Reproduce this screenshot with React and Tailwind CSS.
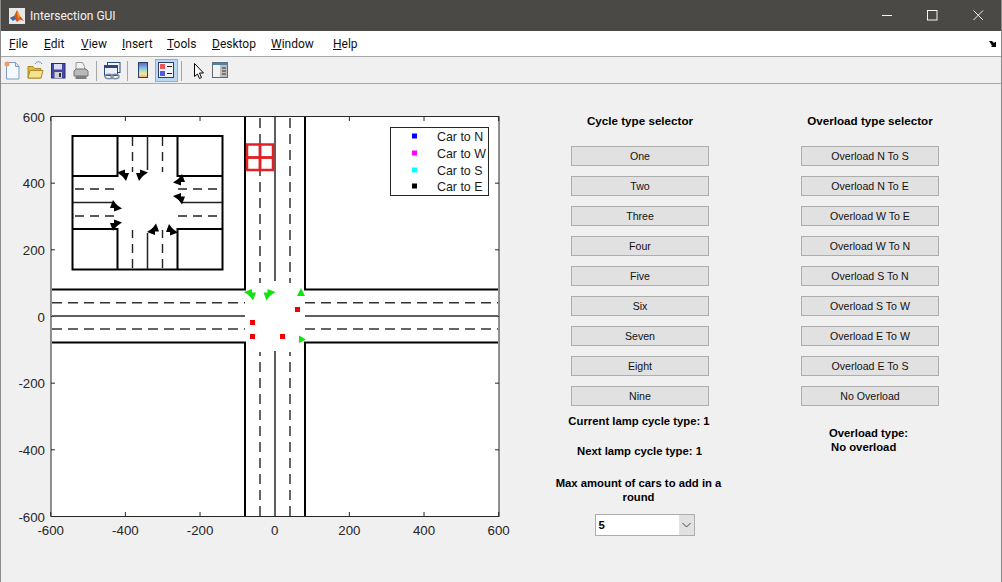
const menus = [["F","ile","w-[35px]"],["E","dit","w-[37px]"],["V","iew","w-[41px]"],["I","nsert","w-[45px]"],["T","ools","w-[45px]"],["D","esktop","w-[59px]"],["W","indow","w-[62px]"],["H","elp","w-[30px]"]];
const cycle = ["One","Two","Three","Four","Five","Six","Seven","Eight","Nine"];
const over = ["Overload N To S","Overload N To E","Overload W To E","Overload W To N","Overload S To N","Overload S To W","Overload E To W","Overload E To S","No Overload"];

function Btn({ children }) {
  return <button className="w-[138px] h-[20px] shrink-0 bg-[#e1e1e1] border border-[#adadad] text-[10.600px] font-normal leading-[18px] text-[#111] text-center">{children}</button>;
}

function Arrow({ x, y, sx = 1, sy = 1, color }) {
  return (
    <g transform={`translate(${x} ${y}) scale(${sx} ${sy})`} fill={color}>
      <polygon points="-6,-1.500 2,-4.500 2,4" />
      <polygon points="3,7 -3,-1 6,-1" />
    </g>
  );
}

function Plot() {
  const xt = [-600,-400,-200,0,200,400,600];
  const yt = [600,400,200,0,-200,-400,-600];
  const X = v => 274.7 + v * 0.3733;
  const Y = v => 316 - v / 3;
  return (
    <svg width="540" height="498" viewBox="1 84 540 498" className="shrink-0 block" style={{fontFamily:'"Liberation Sans",Arial,sans-serif'}}>
      <rect x="51" y="116.500" width="448" height="400" fill="#fff" stroke="#262626" strokeWidth="1" />
      {xt.map(v => <g key={v}>
        <line x1={X(v)} x2={X(v)} y1="516" y2="512" stroke="#262626" />
        <line x1={X(v)} x2={X(v)} y1="117" y2="121" stroke="#262626" />
        <text x={X(v)} y="535" textAnchor="middle" fontSize="13.3" fill="#262626">{v}</text>
      </g>)}
      {yt.map(v => <g key={v}>
        <line x1="51" x2="55" y1={Y(v)+.5} y2={Y(v)+.5} stroke="#262626" />
        <line x1="499" x2="495" y1={Y(v)+.5} y2={Y(v)+.5} stroke="#262626" />
        <text x="45" y={Y(v)+5.500} textAnchor="end" fontSize="13.3" fill="#262626">{v}</text>
      </g>)}

      {/* main roads */}
      <g fill="none">
        <path d="M245 117V289.500H52M305 117V289.500H498M245 516V342.500H52M305 516V342.500H498" stroke="#000" strokeWidth="2" />
        <path d="M275 117V281M275 516V351M52 316H245M305 316H498" stroke="#5e5e5e" strokeWidth="2" />
        <path d="M260 118V283M290 118V283M260 516V352M290 516V352" stroke="#555" strokeWidth="1.800" strokeDasharray="10 6" />
        <path d="M52 302.700H245M305 302.700H498M52 329H245M305 329H498" stroke="#333" strokeWidth="1.600" strokeDasharray="10 6" />
      </g>
      <rect x="247" y="144.500" width="13" height="13" fill="none" stroke="#e02226" strokeWidth="2.500" />
      <rect x="260" y="144.500" width="13" height="13" fill="none" stroke="#e02226" strokeWidth="2.500" />
      <rect x="247" y="157.500" width="13" height="12.500" fill="none" stroke="#e02226" strokeWidth="2.500" />
      <rect x="260" y="157.500" width="13" height="12.500" fill="none" stroke="#e02226" strokeWidth="2.500" />

      {/* lamps */}
      <Arrow x="250" y="293.500" color="#12e212" />
      <Arrow x="269.500" y="293.500" sx="-1" color="#12e212" />
      <polygon points="301,288 305,296 297,296" fill="#12e212" />
      <polygon points="299,335.500 306,339.500 299,343" fill="#12e212" />
      <rect x="295" y="307" width="5" height="5" fill="#f00000" />
      <rect x="250" y="320" width="5" height="5" fill="#f00000" />
      <rect x="250" y="334" width="5" height="5" fill="#f00000" />
      <rect x="280" y="334" width="5" height="5" fill="#f00000" />

      {/* inset */}
      <g fill="none">
        <rect x="72.500" y="136" width="150" height="133.500" stroke="#000" strokeWidth="2" />
        <path d="M117.500 136V176H72.500M177.500 136V176H222.500M117.500 269V229H72.500M177.500 269V229H222.500" stroke="#000" strokeWidth="2" />
        <path d="M147.500 136V170M147.500 269V233M73 202.500H113M182 202.500H222" stroke="#222" strokeWidth="1.500" />
        <path d="M132.500 137V172M162.500 137V172M132.500 268V230M162.500 268V230M75 189H117M178 189H220M75 216H117M178 216H220" stroke="#222" strokeWidth="1.400" strokeDasharray="9 6" />
      </g>
      <Arrow x="123" y="174" color="#000" />
      <Arrow x="142" y="174" sx="-1" color="#000" />
      <Arrow x="179" y="181" sy="-1" color="#000" />
      <Arrow x="179" y="197.500" color="#000" />
      <Arrow x="116" y="207" sx="-1" sy="-1" color="#000" />
      <Arrow x="116" y="224" sx="-1" color="#000" />
      <Arrow x="153" y="230.500" sy="-1" color="#000" />
      <Arrow x="172" y="231" sx="-1" sy="-1" color="#000" />

      {/* legend */}
      <rect x="390.500" y="127.500" width="98" height="68" fill="#fff" stroke="#262626" />
      {[["Car to N","#0000ff",136],["Car to W","#ff00ff",153],["Car to S","#00ffff",170],["Car to E","#000",186]].map(([t,c,y]) => <g key={t}>
        <rect x="412" y={y-2.500} width="5" height="5" fill={c} />
        <text x="437" y={y+5} fontSize="12.400" fill="#1a1a1a">{t}</text>
      </g>)}
    </svg>
  );
}

function Toolbar() {
  return (
    <svg width="240" height="26" viewBox="1 56 240 26" className="block shrink-0">
      {/* new */}
      <path d="M6.500 61.500h9l3.500 3.500v13h-12.500z" fill="#f4f9ff" stroke="#7d9dc4" />
      <circle cx="7" cy="63" r="2.500" fill="#f29a5c" />
      <path d="M15.500 61.500v4h3.500" fill="#dbe7f5" stroke="#7d9dc4" />
      {/* open */}
      <path d="M28 77v-11.500h5l1.500 2h6.500v9.500z" fill="#e2b93b" stroke="#a98a2b" />
      <path d="M28 77l2-7.500h13l-2 7.500z" fill="#f8e28e" stroke="#a98a2b" />
      <path d="M35 63c2-3 5-3 7 0" fill="none" stroke="#6f8db0" />
      {/* save */}
      <rect x="51.500" y="62.500" width="13.500" height="14.500" fill="#4648a8" stroke="#2b2d75" />
      <rect x="54" y="63" width="8" height="5.500" fill="#d9dcf5" />
      <rect x="54.500" y="71" width="7.500" height="6" fill="#cfcfcf" />
      <rect x="59" y="72" width="2" height="4" fill="#333" />
      {/* print */}
      <path d="M76 61.500h6.500l2 4v4h-8.500z" fill="#f2f2f2" stroke="#9a9a9a" />
      <path d="M74 70l2-2h10l2 2v5h-14z" fill="#b9b9b9" stroke="#757575" />
      <path d="M75.500 75h11v3h-11z" fill="#7d7d7d" />
      <line x1="96.500" x2="96.500" y1="60" y2="80" stroke="#a6a6a6" />
      {/* print preview / linked */}
      <rect x="107.500" y="61.500" width="12.500" height="10" fill="#f2f5fa" stroke="#2c4a79" />
      <rect x="104.500" y="64.500" width="13" height="10" fill="#eef2f8" stroke="#2c4a79" />
      <rect x="104.500" y="64.500" width="13" height="2.500" fill="#2c4a79" />
      <ellipse cx="109" cy="75.500" rx="4" ry="2.200" fill="none" stroke="#7e8ea4" strokeWidth="1.500" />
      <ellipse cx="115" cy="75.500" rx="4" ry="2.200" fill="none" stroke="#7e8ea4" strokeWidth="1.500" />
      <line x1="127.500" x2="127.500" y1="60" y2="80" stroke="#a6a6a6" />
      {/* colorbar */}
      <defs>
        <linearGradient id="cb" x1="0" y1="0" x2="0" y2="1">
          <stop offset="0" stopColor="#5b5fc7" />
          <stop offset=".45" stopColor="#8fd0e0" />
          <stop offset=".75" stopColor="#f5e98f" />
          <stop offset="1" stopColor="#f0a08a" />
        </linearGradient>
      </defs>
      <rect x="138.500" y="61.500" width="9" height="15" fill="url(#cb)" stroke="#2c3f6b" />
      {/* legend, active */}
      <rect x="155.500" y="58.500" width="22" height="22" fill="#b9d8f1" stroke="#7eb4e0" />
      <rect x="158.500" y="61.500" width="15" height="15" fill="#f3f3f3" stroke="#2c3f6b" />
      <rect x="160" y="63" width="5" height="5" fill="#e8585c" />
      <rect x="160" y="70" width="5" height="5" fill="#4c5be0" />
      <path d="M167 65.500h5M167 72.500h5" stroke="#222" />
      <line x1="181.500" x2="181.500" y1="60" y2="80" stroke="#a6a6a6" />
      {/* pointer */}
      <path d="M194.500 62.500v13l3-2.500 2 4.500 2-1-2-4.500h4z" fill="#fff" stroke="#000" />
      {/* property */}
      <rect x="212.500" y="61.500" width="15" height="15" fill="#f2f2f2" stroke="#666" />
      <rect x="212.500" y="61.500" width="15" height="2.500" fill="#4f81a8" />
      <rect x="220" y="64" width="7" height="12" fill="#bdbdbd" />
      <path d="M222 67h4M222 70h4M222 73h4" stroke="#333" />
    </svg>
  );
}

export default function App() {
  return (
    <div className="w-[1002px] h-[582px] flex flex-col overflow-hidden bg-[#f0f0f0] border-x border-[#8a8a8a]" style={{fontFamily:'"Liberation Sans",Arial,sans-serif'}}>
      <div className="h-[31px] shrink-0 bg-[#4b4946] flex items-center text-[#f2f2f2]">
        <svg width="16" height="16" viewBox="0 0 16 16" className="ml-[8px] mr-[5px]">
          <rect width="16" height="16" fill="#e8e8e8" />
          <path d="M1 10l4-2 3-6 3 6 4 5-4-1.500-3 2.500-2-3z" fill="#d9541e" />
          <path d="M1 10l4-2 2 3-3 2z" fill="#2a6fb8" />
          <path d="M8 2l3 6-2 3z" fill="#f0a020" />
        </svg>
        <span className="text-[12px]" style={{fontFamily:'Roboto,sans-serif'}}>Intersection GUI</span>
        <svg width="130" height="31" viewBox="0 0 130 31" className="ml-auto mr-[1px]" fill="none" stroke="#f5f5f5">
          <path d="M12 15.500H22" />
          <rect x="57.500" y="10.500" width="9.500" height="9.500" />
          <path d="M103.500 10.500l9.500 9.500M113 10.500l-9.500 9.500" />
        </svg>
      </div>
      <div className="h-[25px] shrink-0 bg-white flex items-center pl-[8px] text-[12px] text-[#111] relative" style={{fontFamily:'Roboto,sans-serif'}}>
        {menus.map(([a,b,w]) => <span key={a} className={w}><span className="underline">{a}</span>{b}</span>)}
        <svg width="8" height="6" viewBox="0 0 8 6" className="absolute right-[4px] top-[10px]">
          <path d="M0 0h3l2 2 1-1h1v5h-5l1-1-1-2z" fill="#000" />
        </svg>
      </div>
      <div className="h-[28px] shrink-0 bg-[#f0f0f0] border-t border-b border-[#a8a8a8] flex items-center">
        <Toolbar />
      </div>
      <div className="flex flex-1 min-h-0">
        <Plot />
        <div className="w-[170px] ml-[14px] shrink-0 flex flex-col items-center text-[11.300px] font-bold text-black text-center pt-[30px]">
          <div className="h-[14px] leading-[14px] mb-[18px] text-[11.650px]">Cycle type selector</div>
          <div className="flex flex-col items-center gap-[10px]">{cycle.map(t => <Btn key={t}>{t}</Btn>)}</div>
          <div className="mt-[8px] leading-[14px] mr-[2px]">Current lamp cycle type: 1</div>
          <div className="mt-[16px] leading-[14px] mr-[1px]">Next lamp cycle type: 1</div>
          <div className="mt-[18px] leading-[14px] w-[170px] mr-[3px]">Max amount of cars to add in a round</div>
          <div className="mt-[10px] ml-[9px] w-[100px] h-[22px] border border-[#adadad] bg-white flex font-bold text-left">
            <span className="flex-1 pl-[3px] leading-[20px]">5</span>
            <span className="w-[15px] bg-[#e1e1e1] flex items-center justify-center">
              <svg width="9" height="6" viewBox="0 0 9 6" fill="none" stroke="#444"><path d="M.5 1l4 4 4-4" /></svg>
            </span>
          </div>
        </div>
        <div className="w-[170px] ml-[60px] shrink-0 flex flex-col items-center text-[11.300px] font-bold text-black text-center pt-[30px]">
          <div className="h-[14px] leading-[14px] mb-[18px] text-[11.650px]">Overload type selector</div>
          <div className="flex flex-col items-center gap-[10px]">{over.map(t => <Btn key={t}>{t}</Btn>)}</div>
          <div className="mt-[20px] w-[79px] ml-[-3px] text-left leading-[14px] whitespace-nowrap">
            <div>Overload type:</div>
            <div className="pl-[2px]">No overload</div>
          </div>
        </div>
      </div>
    </div>
  );
}
